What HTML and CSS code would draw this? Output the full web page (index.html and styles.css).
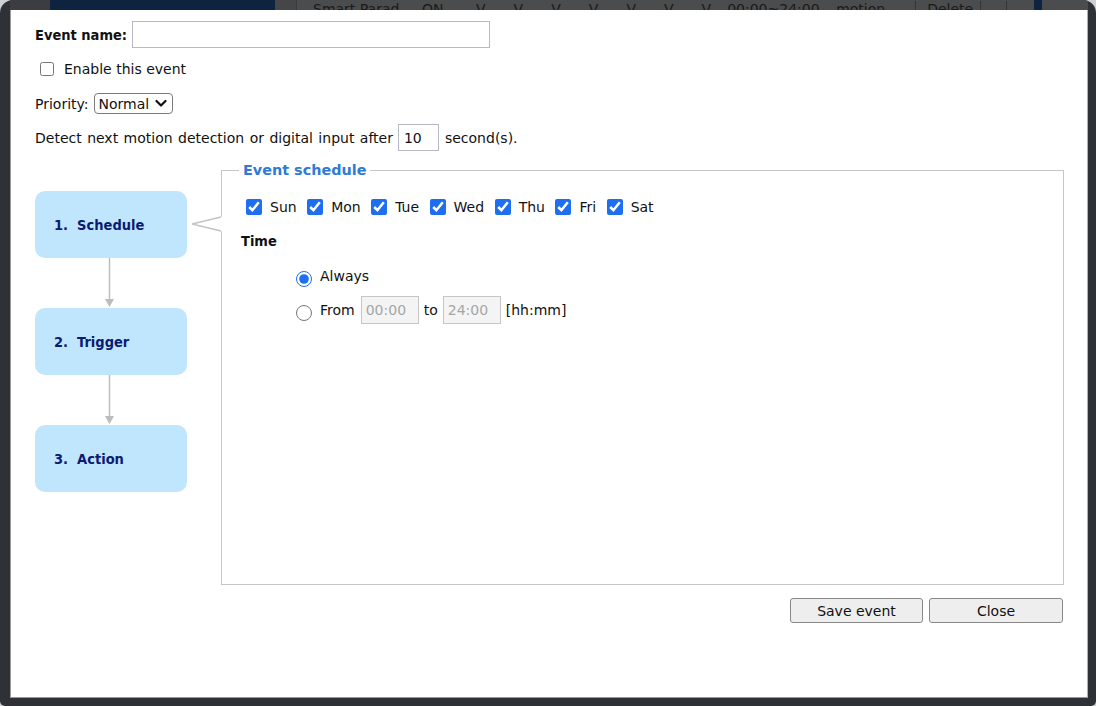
FILE: index.html
```html
<!DOCTYPE html>
<html lang="en">
<head>
<meta charset="utf-8">
<title>Event settings</title>
<link rel="stylesheet" href="styles.css">
</head>
<body>
<div class="window">
  <div class="backdrop">
    <div class="bg-cell c1"></div>
    <div class="bg-cell c2"></div>
    <div class="bg-cell c3"></div>
    <div class="bg-cell c4">Smart Parad</div>
    <div class="bg-cell c5">ON</div>
    <div class="bg-cell cv">V</div>
    <div class="bg-cell cv">V</div>
    <div class="bg-cell cv">V</div>
    <div class="bg-cell cv">V</div>
    <div class="bg-cell cv">V</div>
    <div class="bg-cell cv">V</div>
    <div class="bg-cell cv">V</div>
    <div class="bg-cell c6">00:00~24:00</div>
    <div class="bg-cell c7">motion</div>
    <div class="bg-cell c8">Delete</div>
    <div class="bg-cell c9"></div>
    <div class="bg-cell c10"></div>
    <div class="bg-cell c11"></div>
    <div class="bg-cell c12"></div>
  </div>
  <div class="dialog">
    <div class="row name-row">
      <label class="bold" for="evname">Event name:</label>
      <input class="text name-input" id="evname" type="text">
    </div>
    <div class="row enable-row">
      <input class="cb-enable" id="enable" type="checkbox">
      <label for="enable">Enable this event</label>
    </div>
    <div class="row priority-row">
      <span>Priority:</span>
      <span class="select-wrap">
        <select class="select"><option>Normal</option><option>High</option><option>Low</option></select>
        <svg class="chev" width="12" height="9" viewBox="0 0 12 9"><polyline points="1.5,2 6,6.5 10.5,2" fill="none" stroke="#111" stroke-width="2.2" stroke-linecap="round" stroke-linejoin="round"/></svg>
      </span>
    </div>
    <div class="row detect-row">
      <span class="detect-text">Detect next motion detection or digital input after</span>
      <input class="text sec-input" type="text" value="10">
      <span>second(s).</span>
    </div>
    <div class="main">
      <div class="steps">
        <div class="step">
          <span>1.&nbsp; Schedule</span>
          <svg class="pointer" width="36" height="18" viewBox="0 0 36 18">
            <polygon points="5,9 35,1.5 35,16.5" fill="#fff"/>
            <polyline points="34,2 5,9 34,16" fill="none" stroke="#c4c4c4" stroke-width="1.6" stroke-linejoin="miter"/>
          </svg>
        </div>
        <svg class="arrow" width="152" height="50" viewBox="0 0 152 50">
          <line x1="74.5" y1="0" x2="74.5" y2="42" stroke="#bcbcbc" stroke-width="1.5"/>
          <polygon points="70,41 79,41 74.5,49" fill="#bcbcbc"/>
        </svg>
        <div class="step"><span>2.&nbsp; Trigger</span></div>
        <svg class="arrow" width="152" height="50" viewBox="0 0 152 50">
          <line x1="74.5" y1="0" x2="74.5" y2="42" stroke="#bcbcbc" stroke-width="1.5"/>
          <polygon points="70,41 79,41 74.5,49" fill="#bcbcbc"/>
        </svg>
        <div class="step"><span>3.&nbsp; Action</span></div>
      </div>
      <fieldset class="schedule">
        <legend>Event schedule</legend>
        <div class="days">
          <input type="checkbox" id="d0" checked><label for="d0">Sun</label>
          <input type="checkbox" id="d1" checked><label for="d1">Mon</label>
          <input type="checkbox" id="d2" checked><label for="d2">Tue</label>
          <input type="checkbox" id="d3" checked><label for="d3">Wed</label>
          <input type="checkbox" id="d4" checked><label for="d4">Thu</label>
          <input type="checkbox" id="d5" checked><label for="d5">Fri</label>
          <input type="checkbox" id="d6" checked><label for="d6">Sat</label>
        </div>
        <div class="time-title bold">Time</div>
        <div class="opt always-row">
          <input type="radio" name="when" id="always" checked>
          <label for="always">Always</label>
        </div>
        <div class="opt from-row">
          <input type="radio" name="when" id="from">
          <label for="from">From</label>
          <input class="text time-input" type="text" value="00:00" disabled>
          <span>to</span>
          <input class="text time-input" type="text" value="24:00" disabled>
          <span>[hh:mm]</span>
        </div>
      </fieldset>
    </div>
    <div class="buttons">
      <button class="btn save">Save event</button>
      <button class="btn close">Close</button>
    </div>
  </div>
</div>
</body>
</html>
```
FILE: styles.css
```css
* { box-sizing: border-box; }

html, body {
  margin: 0;
  padding: 0;
  background: #cfd0d2;
}

body {
  font-family: "DejaVu Sans", "Liberation Sans", sans-serif;
  font-size: 14px;
  color: #111;
}

.window {
  width: 1096px;
  height: 706px;
  background: #2e3236;
  border-radius: 13px 13px 5px 5px;
  overflow: hidden;
  padding: 0 8px 8px 10px;
  display: flex;
  flex-direction: column;
}

/* dimmed page behind the dialog */
.backdrop {
  height: 10px;
  flex: none;
  display: flex;
  overflow: hidden;
  background: #4b4c4d;
  color: #1a1a1a;
  font-size: 14px;
  line-height: 16px;
}
.bg-cell {
  flex: none;
  height: 18px;
  margin-top: 1px;
  white-space: nowrap;
  overflow: hidden;
}
.c1 { width: 40px; background: #3b3d40; margin-top: 0; }
.c2 { width: 225px; background: #0e2340; margin-top: 0; }
.c3 { width: 22px; background: #454647; border-right: 1px solid #3a3a3a; margin-top: 0; }
.c4 { width: 113px; padding-left: 16px; }
.c5 { width: 52px; padding-left: 12px; }
.cv { width: 37.6px; text-align: center; }
.c6 { width: 100px; padding-left: 2px; }
.c7 { width: 91px; padding-left: 11px; border-right: 1px solid #333; }
.c8 { width: 65px; padding-left: 11px; border-right: 1px solid #333; }
.c9 { width: 26px; border-right: 1px solid #333; }
.c10 { width: 27px; }
.c11 { width: 8px; background: #0e2340; margin-top: 0; }
.c12 { flex: 1; }

.dialog {
  flex: 1;
  background: #fff;
  border-left: 1px solid #9a9a9a;
  border-right: 1px solid #b0b0b0;
  border-bottom: 1px solid #9a9a9a;
  padding: 11px 23px 0 24px;
  display: flex;
  flex-direction: column;
}

.bold {
  font-weight: bold;
  font-size: 14.5px;
  font-stretch: semi-condensed;
}

.row {
  display: flex;
  align-items: center;
}

.text {
  font-family: inherit;
  font-size: 14px;
  color: #111;
  border: 1px solid #b8b9c8;
  background: #fff;
  margin: 0;
  outline: none;
  border-radius: 0;
}

.name-row { height: 27px; gap: 5px; }
.name-input { width: 358px; height: 27px; }

.enable-row { height: 20px; margin-top: 11px; }
.cb-enable {
  width: 14px;
  height: 14px;
  margin: 0 10px 0 5px;
}

.priority-row { height: 21px; margin-top: 14px; gap: 5px; }
.select-wrap {
  position: relative;
  display: inline-flex;
}
.select {
  appearance: none;
  -webkit-appearance: none;
  width: 79px;
  height: 21px;
  border: 1px solid #7b7b7b;
  border-radius: 4px;
  background: #fff;
  font-family: inherit;
  font-size: 14px;
  color: #111;
  padding: 0 0 0 4px;
  margin: 0;
}
.chev {
  position: absolute;
  right: 6px;
  top: 6px;
  pointer-events: none;
}

.detect-row { height: 27px; margin-top: 10px; gap: 5px; }
.detect-text { word-spacing: 1px; }
.sec-input { width: 41px; height: 27px; padding-left: 5px; margin-right: 1px; }

.main {
  display: flex;
  margin-top: 10px;
}

.steps {
  width: 186px;
  flex: none;
  padding-top: 30px;
  display: flex;
  flex-direction: column;
}

.step {
  position: relative;
  width: 152px;
  height: 67px;
  background: #bfe6fc;
  border-radius: 10px;
  display: flex;
  align-items: center;
  padding-left: 19px;
  color: #0b1a73;
  font-weight: bold;
  font-size: 14.5px;
  font-stretch: semi-condensed;
}
.pointer {
  position: absolute;
  left: 152px;
  top: 24px;
}
.arrow { display: block; flex: none; }

.schedule {
  width: 843px;
  height: 424px;
  margin: 0;
  padding: 18px 17px 0 17px;
  border: 1px solid #c6c6c6;
  min-width: 0;
}
.schedule legend {
  padding: 0 4px;
  color: #2f7bd4;
  font-weight: bold;
  font-size: 14.4px;
  line-height: 18px;
}

.days {
  display: flex;
  align-items: center;
  height: 20px;
  margin-left: 7px;
}
.days input {
  width: 16px;
  height: 16px;
  margin: 0 8px 0 0;
  accent-color: #1d6ff0;
}
.days label { margin-right: 10.5px; }

.time-title {
  margin-top: 14px;
  margin-left: 2px;
  height: 20px;
  display: flex;
  align-items: center;
}

.opt {
  display: flex;
  align-items: center;
  gap: 5px;
  margin-left: 57px;
}
.opt input[type="radio"] {
  width: 16px;
  height: 16px;
  margin: 6px 3px 0 0;
  accent-color: #1d6ff0;
}
.always-row { height: 20px; margin-top: 15px; }
.from-row { height: 28px; margin-top: 10px; }
.from-row label { margin-right: 1px; }
.time-input {
  width: 58px;
  height: 28px;
  padding-left: 4px;
  background: #f4f4f4;
  border-color: #c6c6c6;
  color: #a6a6a6;
}

.buttons {
  display: flex;
  justify-content: flex-end;
  gap: 6px;
  margin-top: 13px;
  padding-right: 1px;
}
.btn {
  height: 25px;
  font-family: inherit;
  font-size: 14px;
  color: #111;
  background: #eeeeee;
  border: 1px solid #888;
  border-radius: 3px;
  margin: 0;
  padding: 0;
}
.save { width: 133px; }
.close { width: 134px; }
```
